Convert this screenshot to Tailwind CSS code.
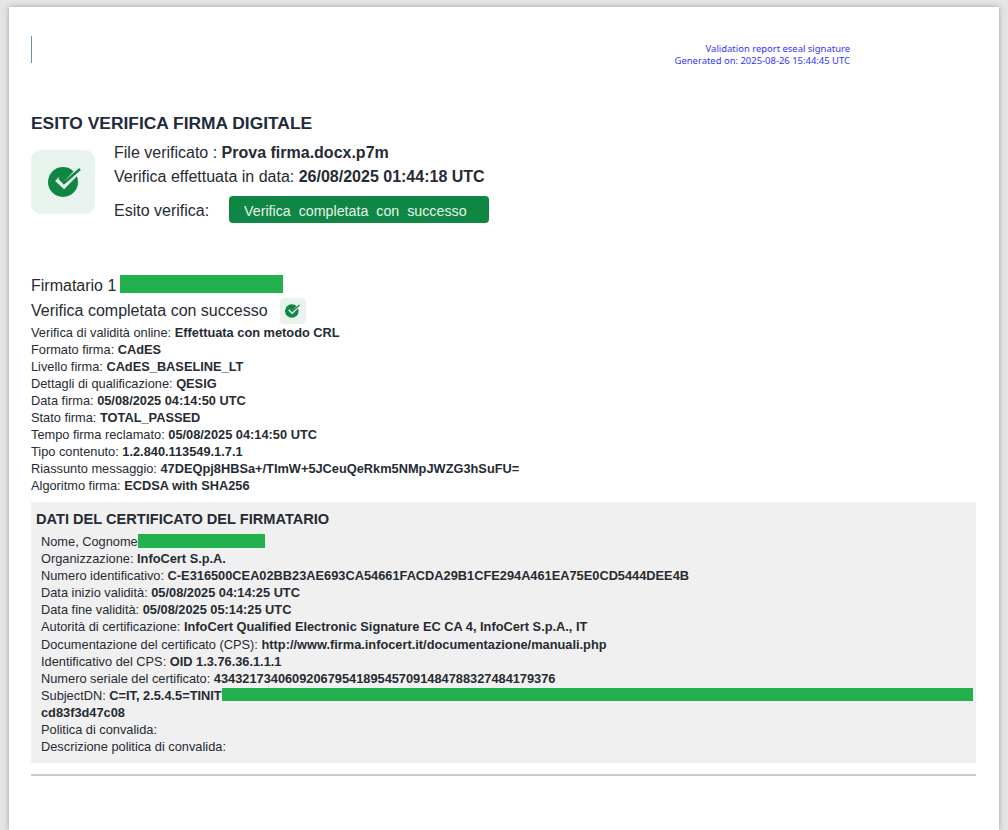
<!DOCTYPE html>
<html lang="it">
<head>
<meta charset="utf-8">
<script src="https://cdn.jsdelivr.net/npm/@tailwindcss/browser@4"></script>
<title>Esito verifica</title>
</head>
<body class="bg-[#e4e4e4] overflow-hidden font-['Liberation_Sans',Arial,sans-serif] text-[#262b33]">
<div class="w-[1008px] h-[830px] pt-[7px] pl-[9px] overflow-hidden">
  <main class="w-[990px] h-[823px] bg-white shadow-[0_0_5px_rgba(0,0,0,0.3)] pl-[22px] pr-[23px] flex flex-col">
    <header class="h-[90px] pt-[29px] flex justify-between items-start">
      <div class="w-px h-[27px] bg-[#6f93ad]"></div>
      <div class="mt-[7px] mr-[126px] text-right text-[9.450px] leading-[12px] text-[#3333ff] font-['Noto_Sans',sans-serif]">
        <p>Validation report eseal signature</p>
        <p>Generated on: 2025-08-26 15:44:45 UTC</p>
      </div>
    </header>
    <h1 class="mt-[15px] text-[17.400px] leading-[22px] font-bold text-[#1f2a3d]">ESITO VERIFICA FIRMA DIGITALE</h1>
    <section class="mt-[7px] flex gap-[19px]">
      <div class="mt-[9px] size-[64px] rounded-[10px] bg-[#e7f3ec] flex items-start pl-[17px] pt-[17px]">
        <svg class="w-[33px] h-[30px]" viewBox="0 0 33 30"><circle cx="15" cy="15" r="15" fill="#0f8643"/><path d="M9 12l7 6.500L29 5" fill="none" stroke="#e7f3ec" stroke-width="5.500"/><path d="M11 11l5 5L32 2" fill="none" stroke="#0f8643" stroke-width="2.400"/></svg>
      </div>
      <div class="flex flex-col text-[16px] leading-[24px]">
        <p>File verificato : <b>Prova firma.docx.p7m</b></p>
        <p>Verifica effettuata in data: <b>26/08/2025 01:44:18 UTC</b></p>
        <div class="mt-[7px] flex items-center">
          <span class="w-[115px] mt-[2px]">Esito verifica:</span>
          <span class="w-[260px] h-[27px] rounded-[4px] bg-[#0f8643] pl-[15px] text-[14.250px] leading-[30px] text-[#e7f3ec] whitespace-pre">Verifica  completata  con  successo</span>
        </div>
      </div>
    </section>
    <section class="mt-[54px]">
      <div class="flex items-center h-[18px] text-[16px]">Firmatario 1<span class="ml-[4px] w-[163px] h-[18px] mb-[4px] bg-[#22b14c]"></span></div>
      <div class="mt-[3px] flex items-center h-[26px] text-[16px]">Verifica completata con successo
        <span class="ml-[12px] size-[26px] rounded-[4px] bg-[#e7f3ec] flex items-center justify-center">
          <svg class="w-[15px] h-[14px]" viewBox="0 0 33 30"><circle cx="15" cy="15" r="15" fill="#0f8643"/><path d="M9 12l7 6.500L29 5" fill="none" stroke="#e7f3ec" stroke-width="5.500"/><path d="M11 11l5 5L32 2" fill="none" stroke="#0f8643" stroke-width="2.800"/></svg>
        </span>
      </div>
      <div class="text-[12.800px] leading-[17px]">
        <p>Verifica di validità online: <b>Effettuata con metodo CRL</b></p>
        <p>Formato firma: <b>CAdES</b></p>
        <p>Livello firma: <b>CAdES_BASELINE_LT</b></p>
        <p>Dettagli di qualificazione: <b>QESIG</b></p>
        <p>Data firma: <b>05/08/2025 04:14:50 UTC</b></p>
        <p>Stato firma: <b>TOTAL_PASSED</b></p>
        <p>Tempo firma reclamato: <b>05/08/2025 04:14:50 UTC</b></p>
        <p>Tipo contenuto: <b>1.2.840.113549.1.7.1</b></p>
        <p>Riassunto messaggio: <b>47DEQpj8HBSa+/TImW+5JCeuQeRkm5NMpJWZG3hSuFU=</b></p>
        <p>Algoritmo firma: <b>ECDSA with SHA256</b></p>
      </div>
    </section>
    <section class="mt-[8px] h-[261px] bg-[#f0f0f0] pl-[5px] pt-[8px]">
      <h2 class="text-[14.600px] leading-[18px] font-bold">DATI DEL CERTIFICATO DEL FIRMATARIO</h2>
      <div class="mt-[5px] pl-[5px] text-[12.800px] leading-[17.100px]">
        <p class="flex">Nome, Cognome<span class="w-[127px] h-[14px] mt-[1px] bg-[#22b14c]"></span></p>
        <p>Organizzazione: <b>InfoCert S.p.A.</b></p>
        <p>Numero identificativo: <b>C-E316500CEA02BB23AE693CA54661FACDA29B1CFE294A461EA75E0CD5444DEE4B</b></p>
        <p>Data inizio validità: <b>05/08/2025 04:14:25 UTC</b></p>
        <p>Data fine validità: <b>05/08/2025 05:14:25 UTC</b></p>
        <p>Autorità di certificazione: <b>InfoCert Qualified Electronic Signature EC CA 4, InfoCert S.p.A., IT</b></p>
        <p>Documentazione del certificato (CPS): <b>http://www.firma.infocert.it/documentazione/manuali.php</b></p>
        <p>Identificativo del CPS: <b>OID 1.3.76.36.1.1.1</b></p>
        <p>Numero seriale del certificato: <b>434321734060920679541895457091484788327484179376</b></p>
        <p class="flex whitespace-pre">SubjectDN: <b>C=IT, 2.5.4.5=TINIT</b><span class="w-[751px] h-[13px] mt-[1px] bg-[#22b14c]"></span></p>
        <p><b>cd83f3d47c08</b></p>
        <p>Politica di convalida:</p>
        <p>Descrizione politica di convalida:</p>
      </div>
    </section>
    <hr class="mt-[11px] border-0 h-[2px] bg-[#cccccc]">
  </main>
</div>
</body>
</html>
